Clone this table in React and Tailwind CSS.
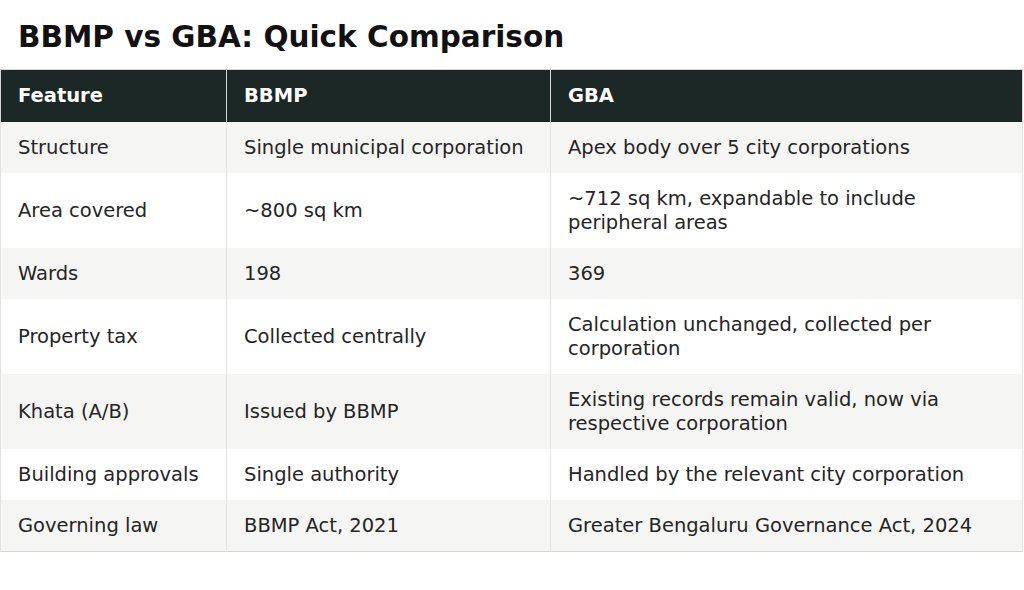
import React from 'react';

const rows = [
    ['Structure', 'Single municipal corporation', 'Apex body over 5 city corporations'],
    ['Area covered', '~800 sq km', '~712 sq km, expandable to include peripheral areas'],
    ['Wards', '198', '369'],
    ['Property tax', 'Collected centrally', 'Calculation unchanged, collected per corporation'],
    ['Khata (A/B)', 'Issued by BBMP', 'Existing records remain valid, now via respective corporation'],
    ['Building approvals', 'Single authority', 'Handled by the relevant city corporation'],
    ['Governing law', 'BBMP Act, 2021', 'Greater Bengaluru Governance Act, 2024'],
];

export default function App() {
    return (
        <div className="w-[1024px] h-[590px] bg-white font-['DejaVu_Sans',sans-serif] text-[#252525]">
            <h1 className="px-[18px] pt-[18px] pb-[13px] text-[29.5px] leading-[38px] font-bold text-[#111]">
                BBMP vs GBA: Quick Comparison
            </h1>
            <table className="w-[1023px] table-fixed border-collapse border border-[#d6d6d4] text-[19.5px] leading-[24px]">
                <colgroup>
                    <col className="w-[226px]" />
                    <col className="w-[324px]" />
                    <col />
                </colgroup>
                <thead>
                    <tr className="bg-[#1b2826] text-white">
                        {['Feature', 'BBMP', 'GBA'].map((h) => (
                            <th key={h} className="text-left font-bold px-[17px] py-[14px] border-x border-[#d6d6d4]">
                                {h}
                            </th>
                        ))}
                    </tr>
                </thead>
                <tbody>
                    {rows.map((r, i) => (
                        <tr key={r[0]} className={i % 2 === 0 ? 'bg-[#f5f5f3]' : 'bg-white'}>
                            {r.map((c, j) => (
                                <td key={j} className="px-[17px] py-[13.5px] border-x border-[#e2e2e0] align-middle">
                                    {c}
                                </td>
                            ))}
                        </tr>
                    ))}
                </tbody>
            </table>
        </div>
    );
}
